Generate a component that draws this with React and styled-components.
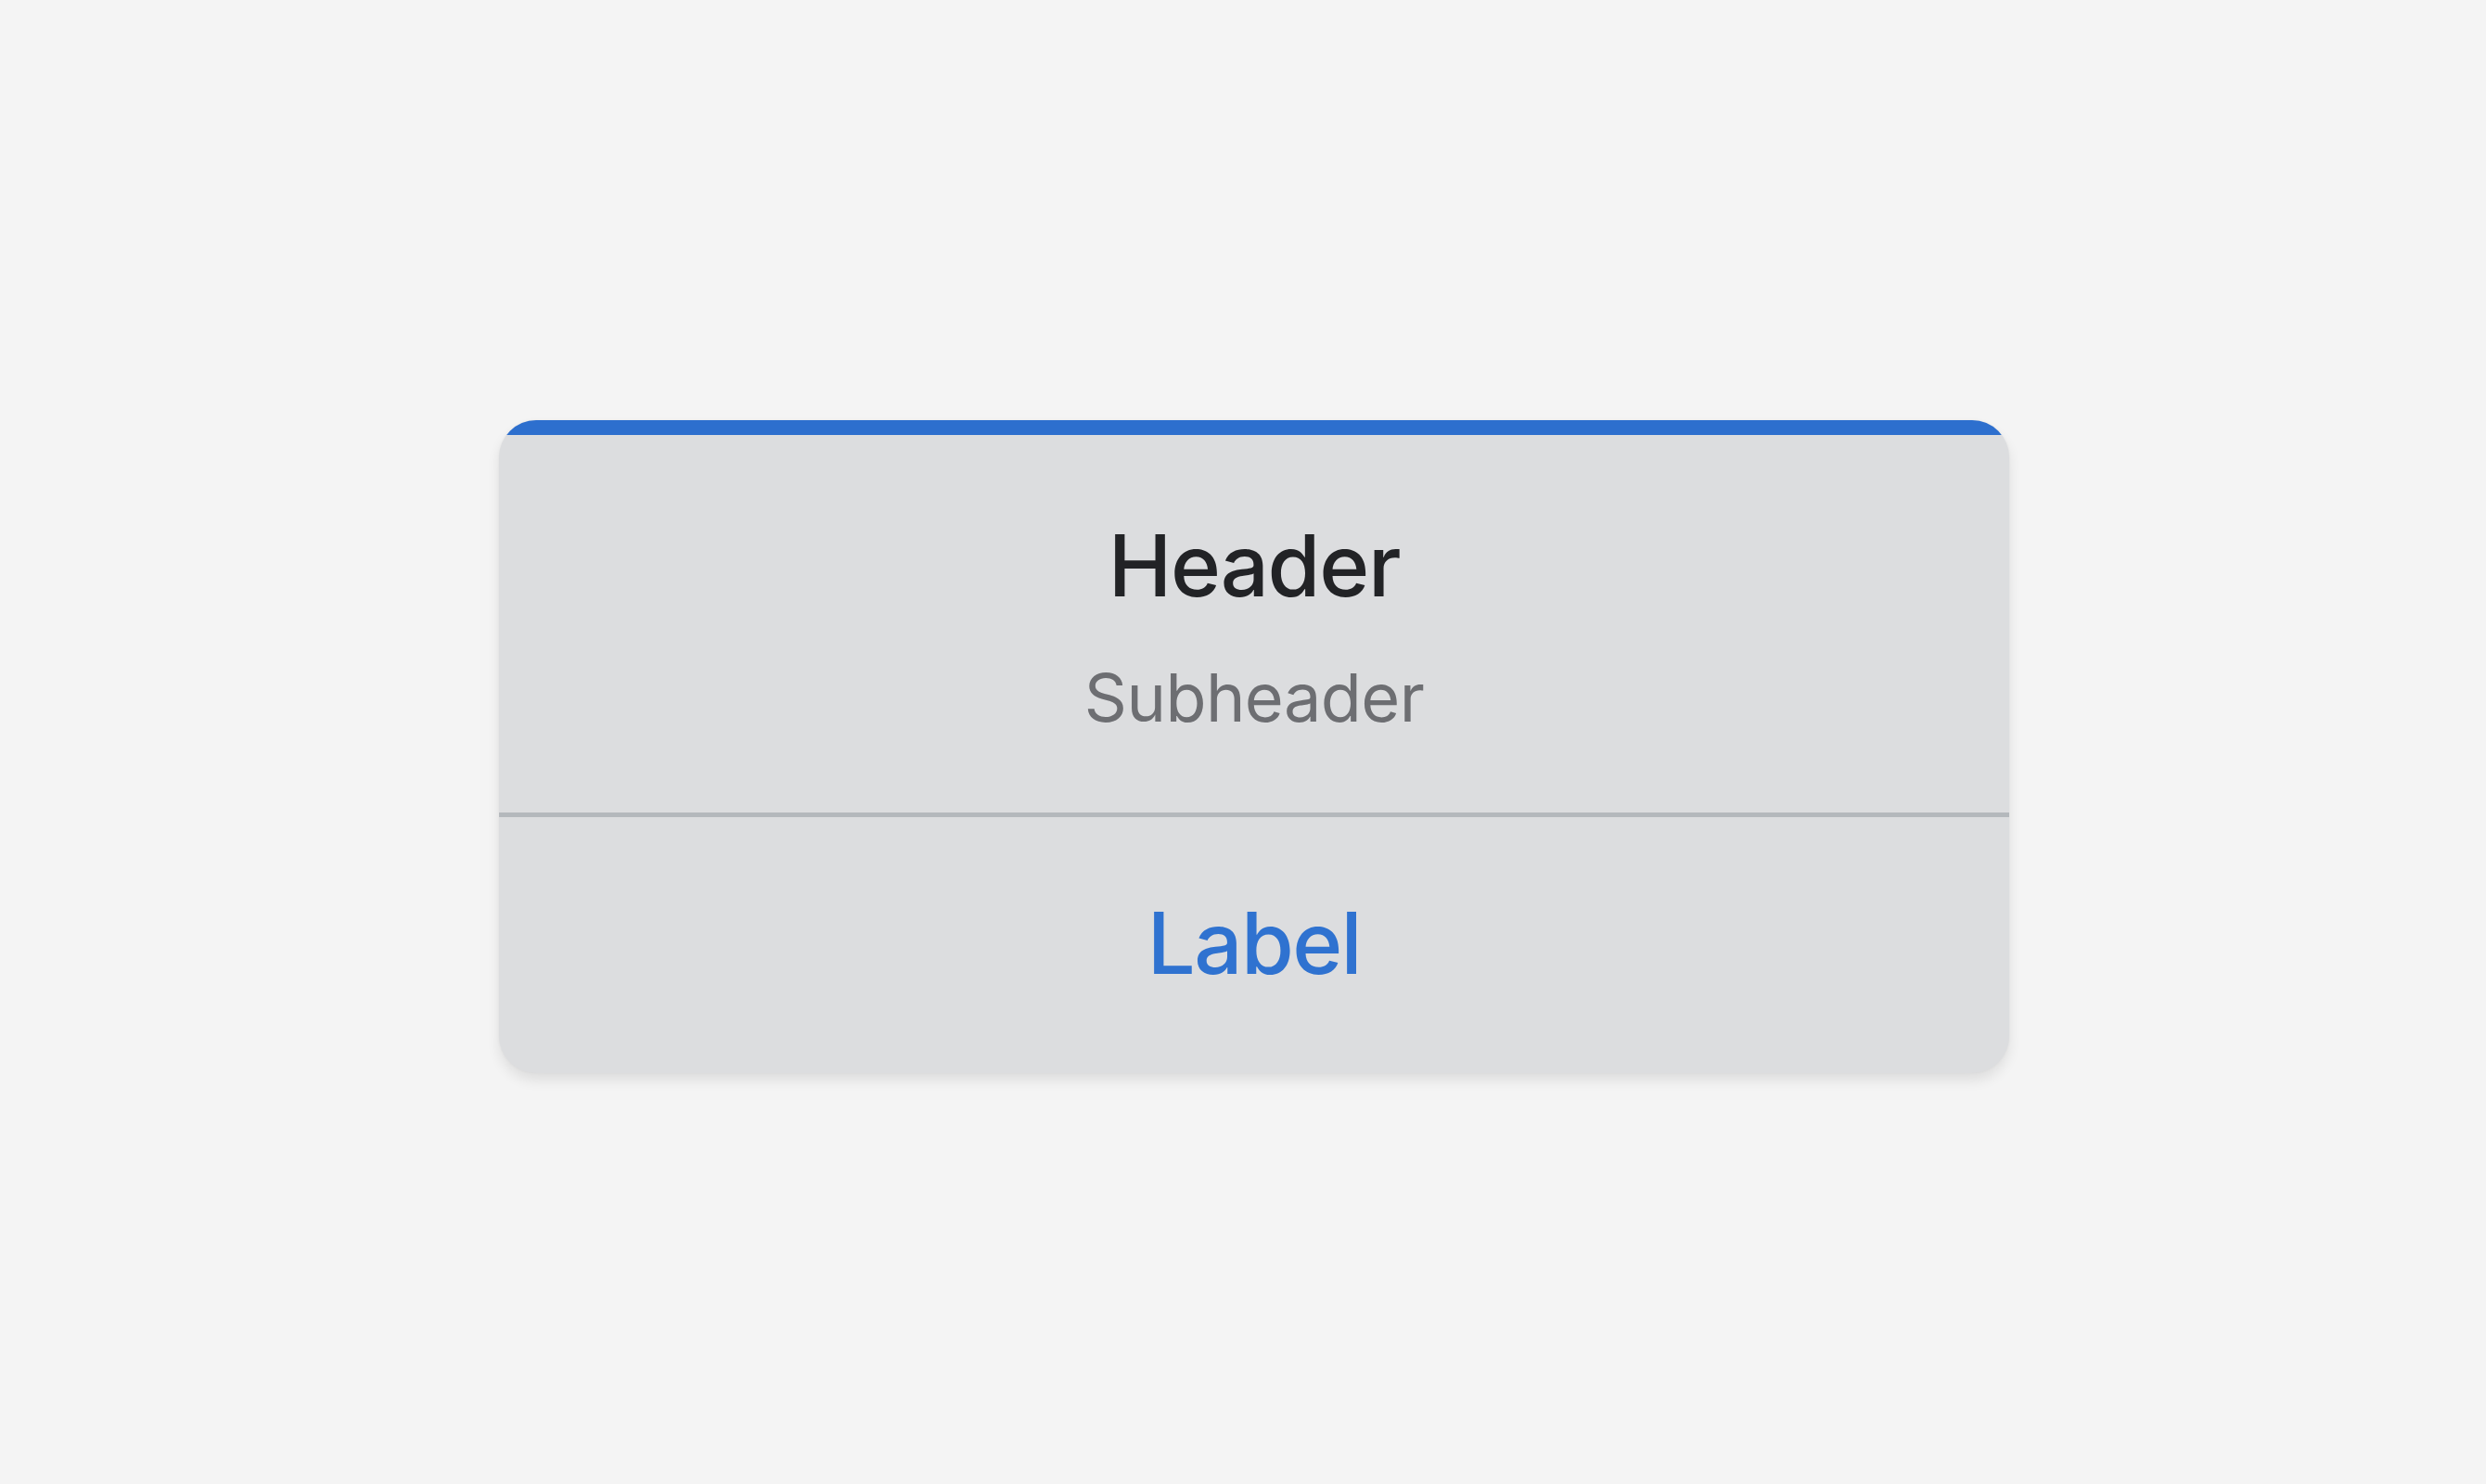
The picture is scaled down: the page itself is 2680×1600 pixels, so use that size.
import React from 'react';
import styled, { createGlobalStyle } from 'styled-components';

const GlobalStyle = createGlobalStyle`
  html, body {
    margin: 0;
    padding: 0;
    background: #f4f4f4;
  }
  body {
    font-family: Inter, "Noto Sans", "Liberation Sans", sans-serif;
  }
`;

const Page = styled.main`
  width: 2680px;
  height: 1600px;
  box-sizing: border-box;
  padding: 10px 0 0 24px;
  display: flex;
  align-items: center;
  justify-content: center;
`;

const Card = styled.section`
  width: 1628px;
  background: #dcdddf;
  border-radius: 40px;
  overflow: hidden;
  box-shadow: 0 8px 14px rgba(0, 0, 0, 0.09), 0 0 3px rgba(0, 0, 0, 0.05);
  display: flex;
  flex-direction: column;
`;

const Accent = styled.div`
  height: 16px;
  background: #2d6fce;
`;

const Head = styled.div`
  display: flex;
  flex-direction: column;
  align-items: center;
  gap: 60px;
  padding: 95px 0 88px;
  border-bottom: 5px solid #b4b8bc;
`;

const Title = styled.h1`
  margin: 0;
  font-size: 92px;
  line-height: 92px;
  font-weight: 500;
  letter-spacing: -1.3px;
  color: #222326;
`;

const Sub = styled.p`
  margin: 0;
  font-size: 72px;
  line-height: 72px;
  font-weight: 400;
  letter-spacing: -0.6px;
  color: #6d6e72;
`;

const Action = styled.button`
  border: 0;
  background: none;
  padding: 90px 0 94px;
  font-family: inherit;
  font-size: 92px;
  line-height: 92px;
  font-weight: 500;
  letter-spacing: -1.6px;
  color: #2f72d0;
  cursor: pointer;
`;

export default function App() {
  return (
    <>
      <GlobalStyle />
      <Page>
        <Card>
          <Accent />
          <Head>
            <Title>Header</Title>
            <Sub>Subheader</Sub>
          </Head>
          <Action>Label</Action>
        </Card>
      </Page>
    </>
  );
}
